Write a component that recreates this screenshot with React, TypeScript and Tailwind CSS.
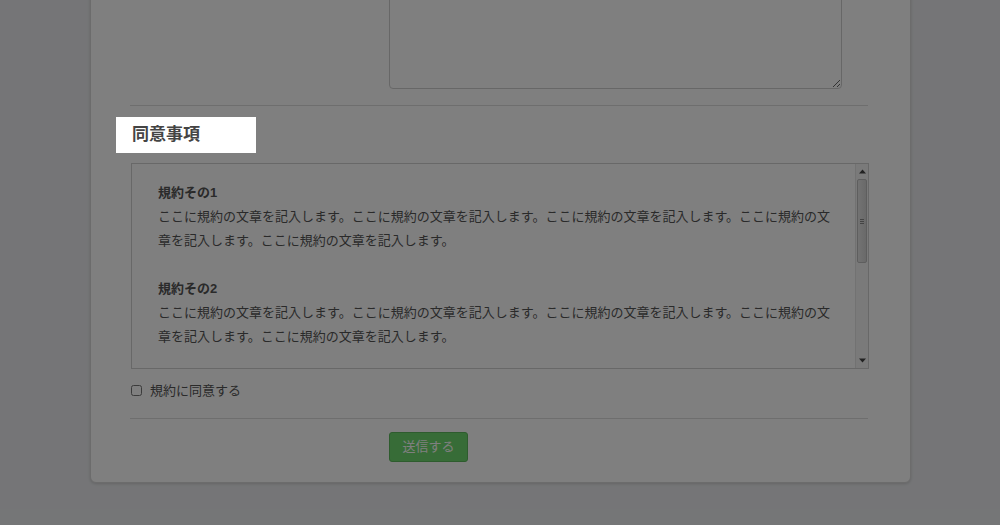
import React from 'react';

const FONT = "font-['Liberation_Sans','Noto_Sans_CJK_JP',sans-serif]";

const SENTENCE = 'ここに規約の文章を記入します。';

const terms = [
  { title: '規約その1', body: SENTENCE.repeat(5) },
  { title: '規約その2', body: SENTENCE.repeat(5) },
  { title: '規約その3', body: SENTENCE.repeat(5) },
];

function FakeScrollbar() {
  return (
    <div className="flex w-[13px] flex-col items-center border-l border-[#e4e4e4] bg-[#f4f4f4] py-[3px]">
      <svg width="7" height="5" viewBox="0 0 7 5" className="mt-[2px]">
        <path d="M0 4.5 L3.5 0.5 L7 4.5 Z" fill="#444" />
      </svg>
      <div className="mt-[5px] flex h-[84px] w-[10px] items-center justify-center rounded-[2px] border border-[#bdbdbd] bg-gradient-to-r from-[#e6e6e6] to-[#d4d4d4]">
        <div className="flex flex-col gap-[1px]">
          <span className="block h-px w-[4px] bg-[#888]" />
          <span className="block h-px w-[4px] bg-[#888]" />
          <span className="block h-px w-[4px] bg-[#888]" />
        </div>
      </div>
      <div className="flex-1" />
      <svg width="7" height="5" viewBox="0 0 7 5" className="mb-[2px]">
        <path d="M0 0.5 L3.5 4.5 L7 0.5 Z" fill="#444" />
      </svg>
    </div>
  );
}

export default function App() {
  return (
    <div className={`relative h-[525px] w-[1000px] overflow-hidden bg-[#eaebee] ${FONT}`}>
      {/* フォームカード（上部は画面外） */}
      <div className="ml-[90px] -mt-[63px] w-[821px] rounded-md border border-[#d8d8d8] bg-[#fefefe] pb-[20px] pl-[39px] pr-[42px] shadow-[0_1px_3px_rgba(0,0,0,0.15)]">
        <div className="flex pt-[20px]">
          <div className="w-[259px]" />
          <textarea
            readOnly
            className="h-[131px] w-[453px] resize rounded-sm border border-[#cfcfcf] bg-white"
          />
        </div>

        <hr className="mt-[16px] border-t border-[#dcdcdc]" />

        {/* ハイライトされた見出し */}
        <h3 className="relative z-10 -ml-[14px] mt-[11px] flex h-[36px] w-[140px] items-center bg-white pl-[16px] text-[17px] font-bold text-[#444]">
          同意事項
        </h3>

        <div className="ml-px mt-[10px] flex h-[206px] w-[738px] border border-[#d0d0d0] bg-white">
          <div className="flex-1 overflow-hidden pb-[16px] pl-[26px] pr-[12px] pt-[17px] text-[13px] leading-[24px] text-[#555]">
            {terms.map((t) => (
              <div key={t.title} className="mb-[24px]">
                <p className="font-bold text-[#555]">{t.title}</p>
                <p>{t.body}</p>
              </div>
            ))}
          </div>
          <FakeScrollbar />
        </div>

        <label className="mt-[12px] flex items-center gap-[8px] text-[13px] text-[#555]">
          <input type="checkbox" className="ml-[1px] h-[11px] w-[11px] accent-[#888]" />
          規約に同意する
        </label>

        <hr className="mt-[17px] border-t border-[#dcdcdc]" />

        <div className="mt-[13px] flex">
          <div className="w-[259px]" />
          <button className="h-[30px] w-[79px] rounded-[3px] border border-[#5cb85c] bg-[#6ed86e] text-[13px] text-white">
            送信する
          </button>
        </div>
      </div>

      {/* 暗転オーバーレイ */}
      <div className="absolute inset-0 z-[5] bg-black/50" />
    </div>
  );
}
